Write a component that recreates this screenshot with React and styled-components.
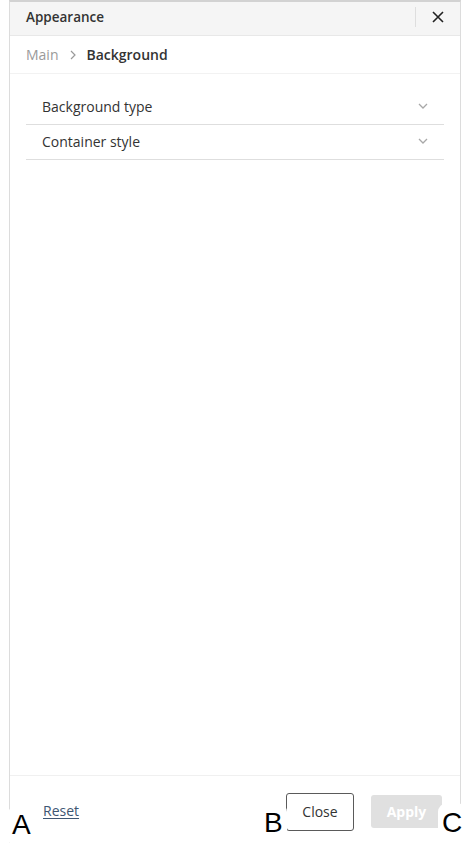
import React from "react";
import styled, { createGlobalStyle } from "styled-components";

const Global = createGlobalStyle`
  html, body { margin: 0; padding: 0; background: #fff; }
  body { font-family: "Open Sans", "Noto Sans", sans-serif; }
  * { box-sizing: border-box; }
`;

const Page = styled.div`
  position: relative;
  width: 474px;
  height: 843px;
  padding: 0 13px 0 9px;
  overflow: hidden;
`;

const Panel = styled.div`
  display: flex;
  flex-direction: column;
  height: 843px;
  border-left: 1px solid #dcdcdc;
  border-right: 1px solid #dcdcdc;
  border-top: 2px solid #d2d2d2;
  background: #fff;
`;

const Header = styled.div`
  display: flex;
  align-items: center;
  height: 34px;
  background: #f5f5f5;
  border-bottom: 1px solid #e8e8e8;
  padding: 0 0 3px 16px;
`;

const Title = styled.div`
  flex: 1;
  font-size: 13.5px;
  font-weight: 600;
  color: #333;
`;

const Divider = styled.div`
  width: 1px;
  height: 20px;
  background: #dedede;
`;

const CloseIcon = styled.button`
  width: 44px;
  height: 30px;
  border: 0;
  background: transparent;
  display: flex;
  align-items: center;
  justify-content: center;
  padding: 0;
  color: #222;
`;

const Crumbs = styled.div`
  display: flex;
  align-items: center;
  height: 38px;
  padding-left: 16px;
  border-bottom: 1px solid #f2f2f2;
  font-size: 14px;
`;

const Crumb = styled.span`
  color: ${(p) => (p.$current ? "#333" : "#9a9a9a")};
  font-weight: ${(p) => (p.$current ? 600 : 400)};
`;

const Sep = styled.span`
  display: inline-flex;
  margin: 0 11px 0 11px;
  color: #9a9a9a;
`;

const Content = styled.div`
  flex: 1;
  padding: 16px 16px 0 16px;
`;

const Item = styled.div`
  display: flex;
  align-items: center;
  justify-content: space-between;
  height: 35px;
  padding: 0 16px 2px 16px;
  border-bottom: 1px solid #dedede;
  font-size: 14px;
  color: #333;
`;

const Footer = styled.div`
  display: flex;
  align-items: center;
  height: 68px;
  border-top: 1px solid #f0f0f0;
  padding: 4px 18px 0 33px;
`;

const ResetLink = styled.a`
  font-size: 14px;
  color: #3e5673;
  text-decoration: underline;
  text-underline-offset: 2px;
  flex: 1;
  margin-bottom: 2px;
`;

const Btn = styled.button`
  font-family: "Open Sans", sans-serif;
  font-size: 14px;
  width: ${(p) => (p.$primary ? "71px" : "68px")};
  height: ${(p) => (p.$primary ? "33px" : "38px")};
  padding: 0;
  border-radius: 3px;
  border: ${(p) => (p.$primary ? "0" : "1px solid #5a5a5a")};
  background: ${(p) => (p.$primary ? "#e0e0e0" : "#fff")};
  color: ${(p) => (p.$primary ? "#fff" : "#333")};
  font-weight: ${(p) => (p.$primary ? 700 : 400)};
  margin-left: ${(p) => (p.$primary ? "17px" : "0")};
`;

const Label = styled.div`
  position: absolute;
  background: #fff;
  border-radius: 9px;
  font-family: "Liberation Sans", Arial, sans-serif;
  font-size: 28px;
  line-height: 1;
  color: #000;
  padding: 6px 4px 8px 4px;
`;

const Chevron = () => (
  <svg width="10" height="6" viewBox="0 0 10 6">
    <path d="M1 1l4 4 4-4" fill="none" stroke="#a8a8a8" strokeWidth="1.3" />
  </svg>
);

export default function App() {
  return (
    <>
      <Global />
      <Page>
        <Panel>
          <Header>
            <Title>Appearance</Title>
            <Divider />
            <CloseIcon aria-label="close">
              <svg width="12" height="12" viewBox="0 0 12 12">
                <path d="M1 1l10 10M11 1L1 11" stroke="#222" strokeWidth="1.6" />
              </svg>
            </CloseIcon>
          </Header>
          <Crumbs>
            <Crumb>Main</Crumb>
            <Sep>
              <svg width="6" height="10" viewBox="0 0 6 10">
                <path d="M1 1l4 4-4 4" fill="none" stroke="#9a9a9a" strokeWidth="1.2" />
              </svg>
            </Sep>
            <Crumb $current>Background</Crumb>
          </Crumbs>
          <Content>
            <Item>
              <span>Background type</span>
              <Chevron />
            </Item>
            <Item>
              <span>Container style</span>
              <Chevron />
            </Item>
          </Content>
          <Footer>
            <ResetLink href="#">Reset</ResetLink>
            <Btn>Close</Btn>
            <Btn $primary>Apply</Btn>
          </Footer>
        </Panel>
        <Label style={{ left: 8, top: 805 }}>A</Label>
        <Label style={{ left: 260, top: 803 }}>B</Label>
        <Label style={{ left: 438, top: 803 }}>C</Label>
      </Page>
    </>
  );
}
